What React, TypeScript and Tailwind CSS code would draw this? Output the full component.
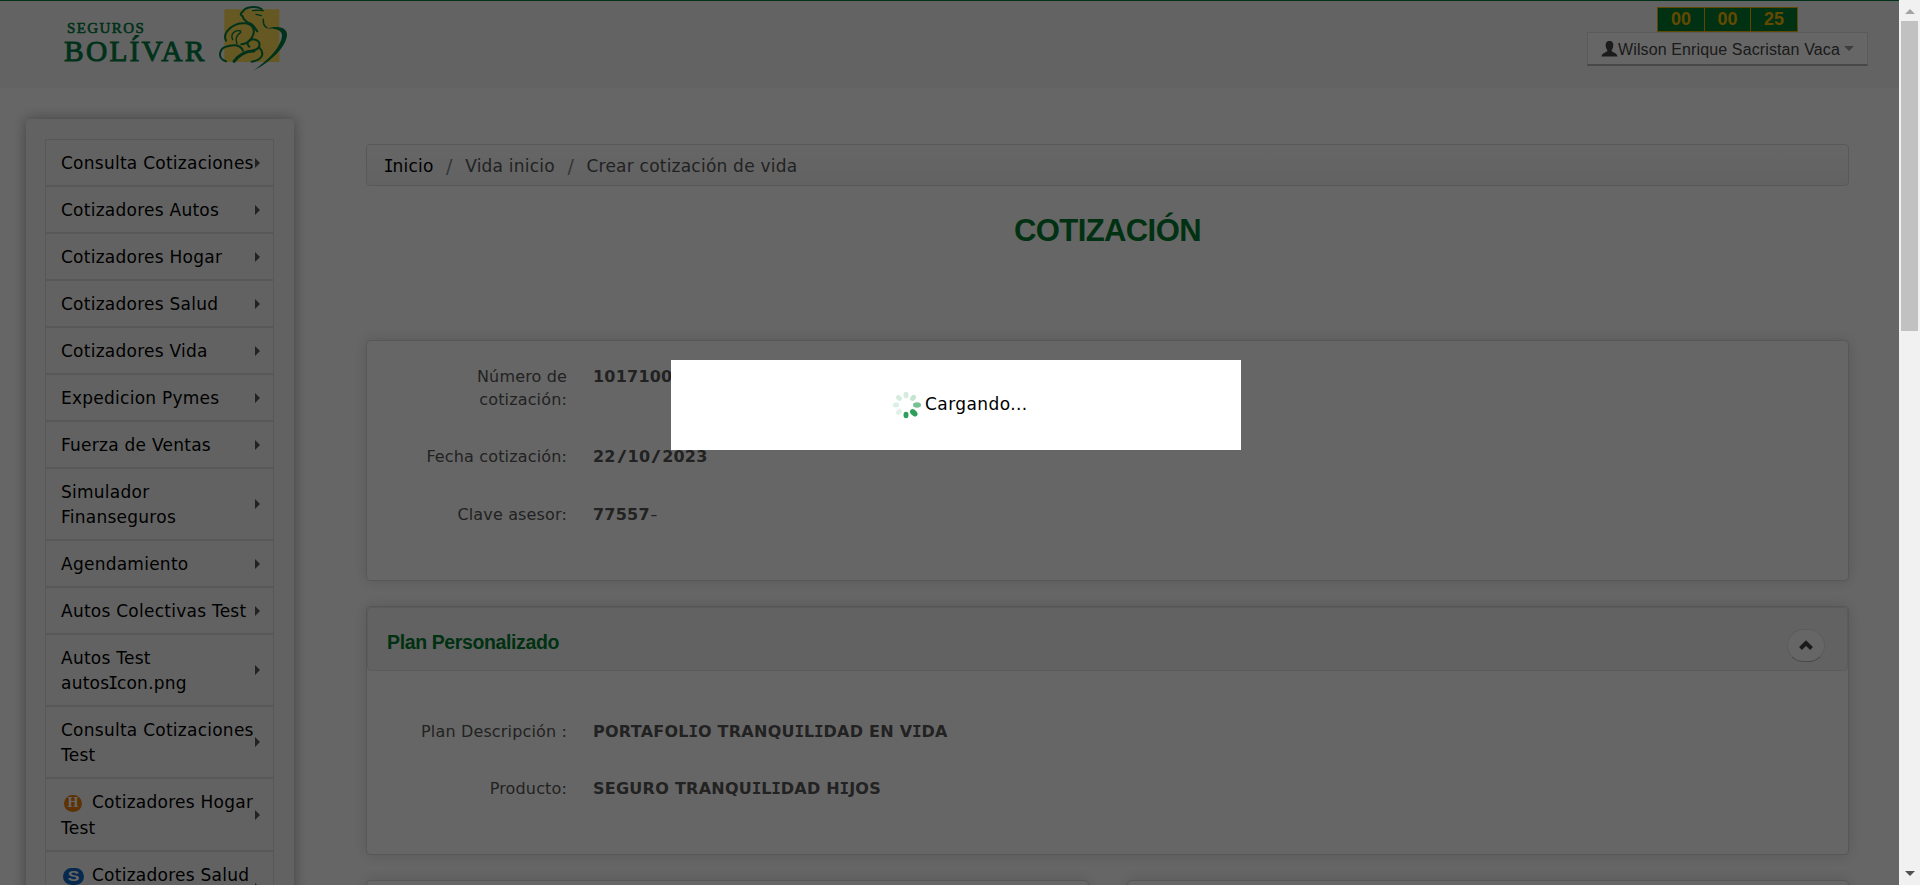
import React from "react";

type MenuItem = { lines: string[]; icon?: "hogar" | "salud" };

const menu: MenuItem[] = [
  { lines: ["Consulta Cotizaciones"] },
  { lines: ["Cotizadores Autos"] },
  { lines: ["Cotizadores Hogar"] },
  { lines: ["Cotizadores Salud"] },
  { lines: ["Cotizadores Vida"] },
  { lines: ["Expedicion Pymes"] },
  { lines: ["Fuerza de Ventas"] },
  { lines: ["Simulador", "Finanseguros"] },
  { lines: ["Agendamiento"] },
  { lines: ["Autos Colectivas Test"] },
  { lines: ["Autos Test", "autosIcon.png"] },
  { lines: ["Consulta Cotizaciones", "Test"] },
  { lines: ["Cotizadores Hogar", "Test"], icon: "hogar" },
  { lines: ["Cotizadores Salud", ""], icon: "salud" },
];

function SlabI({ text, bold = false }: { text: string; bold?: boolean }) {
  const parts = text.split("I");
  return (
    <>
      {parts.map((part, i) => (
        <React.Fragment key={i}>
          {i > 0 && (
            <span className={bold ? "-mx-[0.4px] font-['DejaVu_Sans_Mono',monospace] leading-none" : "-mx-[1.5px] font-['DejaVu_Sans_Mono',monospace] leading-none"}>
              I
            </span>
          )}
          {part}
        </React.Fragment>
      ))}
    </>
  );
}

function Logo() {
  return (
    <div className="ml-16 flex h-[87px] items-start">
      <div className="mt-[20px] w-[146px] font-['Liberation_Serif',serif] whitespace-nowrap text-[#007c41]">
        <div className="ml-[3px] text-[15px] leading-[15px] tracking-[1.4px] [-webkit-text-stroke:0.6px_#007c41]">SEGUROS</div>
        <div className="text-[29.5px] leading-[30px] tracking-[2.2px] [-webkit-text-stroke:0.9px_#007c41]">BOLÍVAR</div>
      </div>
      <svg className="-mt-px" width="90" height="75" viewBox="0 0 270 225">
        <rect x="43" y="28" width="165" height="158" fill="#ffdb55" />
        <path d="M172 86C200 76 232 82 231 105C228 145 175 190 130 212C175 180 215 140 216 105C214 90 195 84 172 86Z" fill="#007c41" />
        <g fill="none" stroke="#007c41" strokeLinecap="round" strokeWidth="6">
          <path d="M155 27C138 17 105 20 99 34C88 42 92 45 98 49C100 60 108 66 124 72C134 78 136 88 142 94" />
          <path d="M128 32C140 29 150 32 160 32M138 43L154 47" strokeWidth="4" />
          <path d="M160 58C159 70 164 80 171 83" strokeWidth="4.500" />
          <path d="M48 122C36 98 70 66 106 70C132 73 138 95 124 115C116 127 105 132 94 133" />
          <path d="M68 119C60 102 75 88 92 93M81 131C75 117 80 105 92 97" strokeWidth="4" />
          <path d="M48 184C20 176 26 142 56 138C82 132 94 140 99 152" />
          <path d="M118 140C104 128 120 115 136 119C156 126 150 148 131 150M148 142C166 162 156 180 125 185" />
          <path d="M132 153C108 152 88 164 72 184" strokeWidth="9" />
        </g>
      </svg>
    </div>
  );
}

function MenuIcon({ kind }: { kind: "hogar" | "salud" }) {
  if (kind === "hogar") {
    return (
      <span className="mr-[10px] ml-[3px] inline-flex h-[17px] w-[18px] items-center justify-center rounded-full bg-[#e87d0c] align-[1px] font-['Liberation_Serif',serif] text-[14px] leading-none font-bold tracking-normal text-white">
        H
      </span>
    );
  }
  return (
    <span className="mr-2 ml-[2px] inline-flex h-[17px] w-[21px] items-center justify-center rounded-full bg-[#1168c0] align-[0px] font-['Liberation_Sans',sans-serif] text-[14px] leading-none font-bold tracking-normal text-white">
      <span className="scale-x-125">S</span>
    </span>
  );
}

function Sidebar() {
  return (
    <nav className="mt-[31px] ml-[26px] h-[1000px] w-[268px] shrink-0 rounded-[5px] bg-[#f6f6f6] pt-5 pr-5 pl-[19px] shadow-[0_0_14px_rgba(0,0,0,0.35)]">
      <ul className="border border-[#dcdcdc]">
        {menu.map((item, i) => (
          <li
            key={i}
            className="flex items-center border-b-2 border-[#dcdcdc] pt-[11px] pb-[9px] pl-[15px] text-[17px] leading-[25px] tracking-[0.25px] text-black"
          >
            <div className="w-[194px] whitespace-nowrap">
              {item.lines.map((line, j) => (
                <div key={j} className={item.icon && j === 0 ? "h-[26px]" : "h-[25px]"}>
                  {item.icon && j === 0 && <MenuIcon kind={item.icon} />}
                  <SlabI text={line} />
                </div>
              ))}
            </div>
            <span className="-mt-[2px] h-0 w-0 border-y-[5px] border-l-[5px] border-y-transparent border-l-[#555]" />
          </li>
        ))}
      </ul>
    </nav>
  );
}

function Field({ label, value, className }: { label: React.ReactNode; value: React.ReactNode; className: string }) {
  return (
    <div className={`flex text-[16px] leading-[23px] text-[#555] ${className}`}>
      <div className="w-[200px] text-right tracking-[0.15px]">{label}</div>
      <div className="ml-[26px] whitespace-nowrap">{value}</div>
    </div>
  );
}

const card = "rounded-[4px] border border-[#d9d9d9] bg-white shadow-[0_0_14px_rgba(0,0,0,0.14)]";
const digits = "font-bold tracking-[0.22px]";
const caps = "font-bold tracking-[0.26px]";
const slash = "mx-[2.9px] inline-block scale-x-150";

export default function App() {
  return (
    <div className="flex h-[885px] overflow-hidden bg-white font-['DejaVu_Sans',sans-serif]">
      <div className="relative h-[885px] w-[1899px] overflow-hidden">
        <header className="flex h-[88px] justify-between border-t border-[#007a3d] bg-[#f8f8f8]">
          <Logo />
          <div className="mr-[31px] flex w-[281px] flex-col font-['Liberation_Sans',sans-serif]">
            <div className="mt-[6px] ml-[70px] flex h-[25px] w-[141px] border border-[#f0b400] bg-[#007a2d] text-[18px] leading-[23px] font-bold text-[#f5b800]">
              <span className="w-[47px] border-r border-[#f0b400] text-center">00</span>
              <span className="w-[46px] border-r border-[#f0b400] text-center">00</span>
              <span className="w-[46px] text-center">25</span>
            </div>
            <div className="flex h-[34px] items-center border border-b-2 border-[#e0e0e0] border-b-[#b3b3b3] bg-white pl-[13px] text-[16px] text-[#444]">
              <svg width="17" height="16" viewBox="0 0 17 16" fill="#444">
                <path d="M8.500 0C11.500 0 12.500 2 12.300 5C12 7.500 10.800 8.500 10.500 10C12 11.500 16 11.800 16.500 15.500H.5C1 11.800 5 11.500 6.500 10C6.200 8.500 5 7.500 4.700 5C4.500 2 5.500 0 8.500 0Z" />
              </svg>
              <span className="mt-[2px] tracking-[0.12px] whitespace-nowrap">Wilson Enrique Sacristan Vaca</span>
              <span className="ml-1 h-0 w-0 border-x-[5px] border-t-[5px] border-x-transparent border-t-[#999]" />
            </div>
          </div>
        </header>
        <div className="flex">
          <Sidebar />
          <main className="ml-[72px] w-[1483px] pt-14">
            <div className="flex h-[42px] items-center rounded-[4px] border border-[#dcdcdc] bg-linear-to-b from-white to-[#f5f5f5] pt-[3px] pl-[18px] text-[17px] tracking-[0.22px] text-[#555]">
              <span className="whitespace-nowrap text-black"><SlabI text="Inicio" /></span>
              <span className="mx-[12.5px] text-[19px] text-[#888]">/</span>
              <span>Vida inicio</span>
              <span className="mx-[12.5px] text-[19px] text-[#888]">/</span>
              <span>Crear cotización de vida</span>
            </div>
            <h1 className="mt-[25px] h-[39px] text-center font-['Liberation_Sans',sans-serif] text-[31px] leading-10 font-bold tracking-[-0.6px] text-[#007a2d]">
              COTIZACIÓN
            </h1>
            <section className={`mt-[90px] h-[241px] pt-6 ${card}`}>
              <Field
                label={<>Número de<br />cotización:</>}
                value={<span className={digits}>1017100</span>}
                className="h-[80px]"
              />
              <Field
                label="Fecha cotización:"
                value={
                  <span className={digits}>
                    22<span className={slash}>/</span>10<span className={slash}>/</span>2023
                  </span>
                }
                className="h-[58px]"
              />
              <Field
                label="Clave asesor:"
                value={<><span className={digits}>77557</span><span className="ml-px inline-block scale-x-125">-</span></>}
                className=""
              />
            </section>
            <section className={`mt-[25px] h-[249px] ${card}`}>
              <div className="flex h-16 items-center justify-between rounded-[4px] border border-[#e3e3e3] bg-[#f5f5f5] pr-[22px] pl-[19px]">
                <h2 className="mt-[8px] font-['Liberation_Sans',sans-serif] text-[19.5px] font-bold tracking-[-0.38px] text-[#007a2d]">Plan Personalizado</h2>
                <div className="mt-[12px] flex h-[33px] w-[38px] items-center justify-center rounded-full border border-[#e3e3e3] border-b-[#b3b3b3] bg-white">
                  <svg width="14" height="10" viewBox="0 0 14 10" fill="none" stroke="#444" strokeWidth="4">
                    <path d="M1.500 8.500L7 3L12.500 8.500" />
                  </svg>
                </div>
              </div>
              <Field
                label="Plan Descripción :"
                value={<span className={caps}><SlabI bold text="PORTAFOLIO TRANQUILIDAD EN VIDA" /></span>}
                className="mt-[49px] h-[57px]"
              />
              <Field label="Producto:" value={<span className={caps}><SlabI bold text="SEGURO TRANQUILIDAD HIJOS" /></span>} className="" />
            </section>
            <div className="mt-[25px] flex justify-between">
              <section className={`h-[200px] w-[723px] ${card}`} />
              <section className={`h-[200px] w-[722px] ${card}`} />
            </div>
          </main>
        </div>
        <div className="absolute inset-0 bg-black/60" />
        <div className="absolute top-[360px] left-[671px] flex h-[90px] w-[570px] items-center bg-white pl-[219.5px] text-black">
          <svg width="30" height="30" viewBox="-15 -15 30 30" fill="#2e9f5b">
            <ellipse cy="-10" rx="2.500" ry="3.200" opacity=".2" />
            <ellipse cy="-10" rx="2.500" ry="3.300" opacity=".28" transform="rotate(45)" />
            <ellipse cy="-11" rx="2.700" ry="4" opacity=".65" transform="rotate(90)" />
            <ellipse cy="-11" rx="2.900" ry="4.300" transform="rotate(135)" />
            <ellipse cy="-10" rx="2.500" ry="3.300" transform="rotate(180)" />
            <ellipse cy="-10" rx="2.500" ry="3.200" opacity=".15" transform="rotate(225)" />
            <ellipse cy="-10" rx="2.500" ry="3.200" opacity=".17" transform="rotate(270)" />
            <ellipse cy="-10" rx="2.500" ry="3.200" opacity=".2" transform="rotate(315)" />
          </svg>
          <span className="-mt-px ml-[4.500px] text-[17px] tracking-[0.42px]">Cargando...</span>
        </div>
      </div>
      <div className="flex h-[885px] w-[21px] flex-col items-center bg-[#f1f1f1]">
        <span className="mt-[9px] h-0 w-0 border-x-[5px] border-b-[5px] border-x-transparent border-b-[#a3a3a3]" />
        <span className="mt-[7px] h-[310px] w-[17px] bg-[#c1c1c1]" />
        <span className="mt-auto mb-[9px] h-0 w-0 border-x-[5px] border-t-[5px] border-x-transparent border-t-[#505050]" />
      </div>
    </div>
  );
}
